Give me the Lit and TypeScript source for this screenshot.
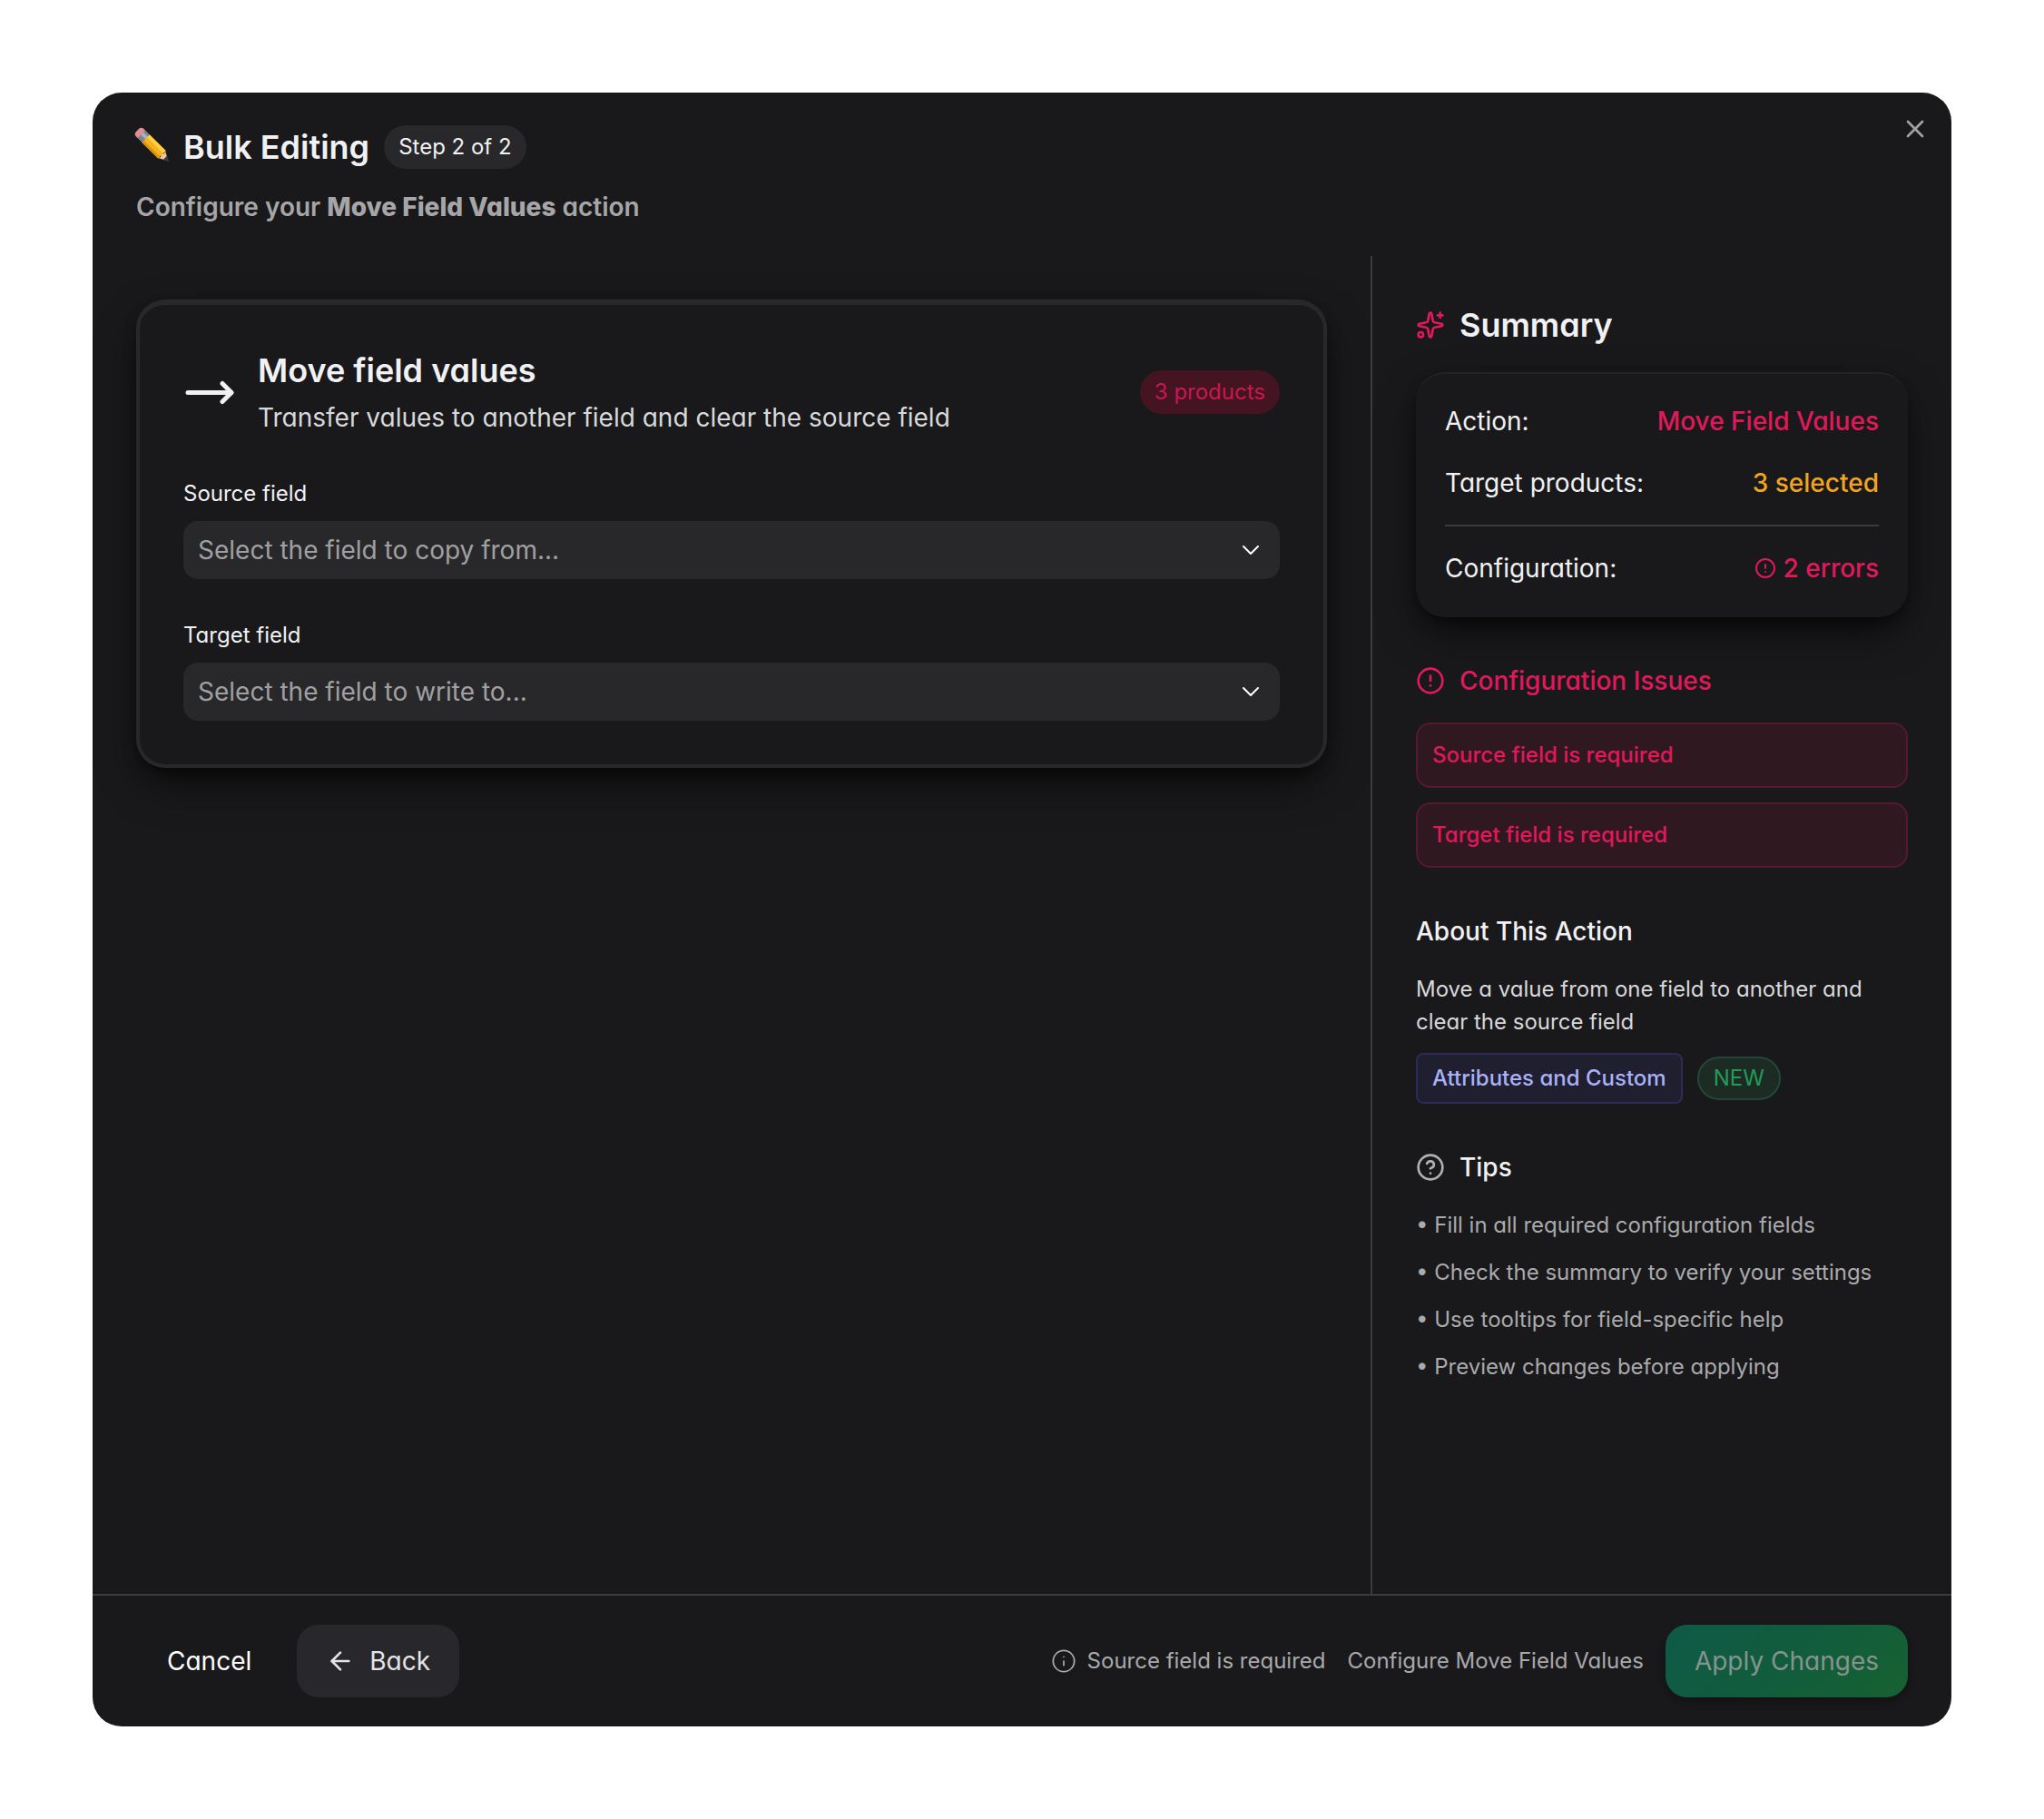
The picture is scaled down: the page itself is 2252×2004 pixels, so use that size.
import { LitElement, html, css, svg, nothing, type TemplateResult } from "lit";
import { customElement, property, state } from "lit/decorators.js";

const ICONS: Record<string, TemplateResult> = {
  sparkles: svg`
    <path d="M11.017 2.814a1 1 0 0 1 1.966 0l1.051 5.558a2 2 0 0 0 1.594 1.594l5.558 1.051a1 1 0 0 1 0 1.966l-5.558 1.051a2 2 0 0 0-1.594 1.594l-1.051 5.558a1 1 0 0 1-1.966 0l-1.051-5.558a2 2 0 0 0-1.594-1.594l-5.558-1.051a1 1 0 0 1 0-1.966l5.558-1.051a2 2 0 0 0 1.594-1.594z"/>
    <path d="M20 2v4"/><path d="M22 4h-4"/><circle cx="4" cy="20" r="2"/>`,
  alert: svg`<circle cx="12" cy="12" r="10"/><path d="M12 8v4"/><path d="M12 16h.01"/>`,
  help: svg`<circle cx="12" cy="12" r="10"/><path d="M9.09 9a3 3 0 0 1 5.83 1c0 2-3 3-3 3"/><path d="M12 17h.01"/>`,
  info: svg`<circle cx="12" cy="12" r="10"/><path d="M12 16v-4"/><path d="M12 8h.01"/>`,
  close: svg`<path d="M18 6 6 18"/><path d="m6 6 12 12"/>`,
  chevron: svg`<path d="m6 9 6 6 6-6"/>`,
  back: svg`<path d="m12 19-7-7 7-7"/><path d="M19 12H5"/>`,
};

@customElement("ui-icon")
export class UiIcon extends LitElement {
  static styles = css`
    :host { display: inline-flex; flex: none; width: 32px; height: 32px; }
    :host([size="sm"]) { width: 24px; height: 24px; }
    :host([size="md"]) { width: 28px; height: 28px; }
    .glyph {
      width: 100%;
      height: 100%;
      fill: none;
      stroke: currentColor;
      stroke-width: 2;
      stroke-linecap: round;
      stroke-linejoin: round;
    }
    .thin { stroke-width: 1.5; }
  `;

  @property() name = "";
  @property({ type: Boolean }) thin = false;

  render() {
    return html`<svg class="glyph ${this.thin ? "thin" : ""}" viewBox="0 0 24 24" aria-hidden="true">
      ${ICONS[this.name] ?? nothing}
    </svg>`;
  }
}

interface Field {
  id: string;
  label: string;
  placeholder: string;
}

@customElement("app-root")
export class AppRoot extends LitElement {
  static styles = css`
    :host {
      display: block;
      min-height: 100vh;
      box-sizing: border-box;
      padding: 102px;
      background: #ffffff;
      color: #f1f1f3;
      font-family: Inter, "Liberation Sans", sans-serif;
      font-feature-settings: "cv11";
      font-size: 28px;
      line-height: 44px;
    }
    * { box-sizing: border-box; }
    h1, h2, h3, p, ul { margin: 0; padding: 0; font-size: inherit; font-weight: inherit; }
    button, select { font: inherit; font-feature-settings: inherit; color: inherit; border: 0; margin: 0; }

    .dialog {
      position: relative;
      display: flex;
      flex-direction: column;
      min-height: calc(100vh - 204px);
      border-radius: 32px;
      background: #19191b;
      overflow: hidden;
    }

    .header { display: flex; flex-direction: column; gap: 22px; padding: 36px 48px 34px; }
    .title-row { display: flex; align-items: center; gap: 16px; }
    .pencil { width: 36px; height: 36px; flex: none; overflow: visible; }
    .title { font-size: 36px; line-height: 48px; font-weight: 600; }
    .subtitle { line-height: 40px; font-weight: 600; color: #a6a6a8; }
    .subtitle strong { font-weight: 800; }
    .close {
      position: absolute;
      top: 24px;
      right: 24px;
      display: flex;
      padding: 0;
      background: none;
      color: #a2a2a5;
    }

    .pill {
      display: inline-flex;
      align-items: center;
      height: 48px;
      padding: 0 16px;
      border-radius: 24px;
      font-size: 24px;
      line-height: 32px;
      white-space: nowrap;
    }
    .pill-step { background: #28282a; }
    .pill-count { background: #441423; color: #c9184f; }
    .pill-new { background: #1c2b23; color: #249a58; border: 2px solid #23483a; }

    .body { flex: 1; display: grid; grid-template-columns: minmax(0, 1fr) 640px; }
    .main { padding: 48px; }

    .card {
      padding: 48px;
      border: 4px solid #28282a;
      border-top-width: 6px;
      border-radius: 32px;
      box-shadow: 0 20px 50px -10px rgba(0, 0, 0, 0.7), 0 8px 16px -4px rgba(0, 0, 0, 0.5);
    }
    .card-head { display: flex; align-items: center; gap: 24px; margin-bottom: 48px; }
    .card-arrow { flex: none; width: 58px; height: 32px; }
    .card-text { flex: 1; display: flex; flex-direction: column; gap: 8px; }
    .card-sub { line-height: 40px; color: #d8d8da; }

    .fields { display: flex; flex-direction: column; gap: 46px; }
    .field { display: flex; flex-direction: column; gap: 14px; }
    .label { font-size: 24px; line-height: 32px; }
    .picker { display: grid; align-items: center; color: #ffffff; }
    .picker > * { grid-area: 1 / 1; }
    .picker ui-icon { justify-self: end; margin-right: 16px; pointer-events: none; }
    .select {
      appearance: none;
      width: 100%;
      height: 64px;
      padding: 0 64px 0 16px;
      border-radius: 16px;
      background: #28282a;
      color: #a0a0a3;
    }

    .aside {
      display: flex;
      flex-direction: column;
      gap: 48px;
      padding: 48px;
      border-left: 2px solid #3c3c3e;
    }
    .group { display: flex; flex-direction: column; gap: 24px; }
    .group-head { display: flex; align-items: center; gap: 16px; font-weight: 500; }
    .summary-title { font-size: 36px; line-height: 56px; font-weight: 600; }
    .accent { color: #e0195a; }
    .muted { color: #b0b0b3; }

    .summary {
      display: flex;
      flex-direction: column;
      gap: 24px;
      padding: 30px 32px 32px;
      border-radius: 32px;
      border-top: 2px solid #232325;
      box-shadow: 0 20px 50px -10px rgba(0, 0, 0, 0.7), 0 8px 16px -4px rgba(0, 0, 0, 0.5);
    }
    .row { display: flex; justify-content: space-between; align-items: center; }
    .row-value { display: flex; align-items: center; gap: 8px; font-weight: 500; }
    .warn { color: #f2a41f; }
    .rule { height: 2px; background: #3a3a3c; }

    .issues { display: flex; flex-direction: column; gap: 16px; list-style: none; }
    .issue {
      padding: 16px;
      border: 2px solid #581830;
      border-radius: 16px;
      background: #301821;
      font-size: 24px;
      line-height: 36px;
      font-weight: 500;
      color: #e0195a;
    }

    .about { display: flex; flex-direction: column; gap: 16px; }
    .copy { font-size: 24px; line-height: 36px; color: #d8d8da; }
    .tags { display: flex; align-items: center; gap: 16px; }
    .tag {
      padding: 8px 16px;
      border: 2px solid #2d2b56;
      border-radius: 8px;
      background: #1f1f30;
      color: #a9b1f7;
      font-size: 24px;
      line-height: 36px;
      font-weight: 500;
    }

    .tips { display: flex; flex-direction: column; gap: 16px; list-style: none; }
    .tip { font-size: 24px; line-height: 36px; color: #aaaaac; }
    .tip::before { content: "• "; }

    .footer {
      display: flex;
      align-items: center;
      justify-content: space-between;
      padding: 32px 48px;
      border-top: 2px solid #3c3c3e;
    }
    .actions { display: flex; align-items: center; gap: 16px; }
    .status { display: flex; align-items: center; gap: 24px; font-size: 24px; color: #a9a9ac; }
    .hint { display: flex; align-items: center; gap: 12px; }
    .button {
      display: flex;
      align-items: center;
      gap: 16px;
      height: 80px;
      padding: 0 32px;
      border-radius: 24px;
      background: none;
      font-size: 28px;
      color: #ffffff;
    }
    .button-cancel { border: 2px solid transparent; }
    .button-back { background: #28282c; color: #e4e4e7; }
    .button-apply {
      background: linear-gradient(135deg, #0f5a47, #115c3d 50%, #186132);
      color: #87938d;
      box-shadow: 0 4px 8px rgba(0, 0, 0, 0.3);
    }
  `;

  @state() private fields: Field[] = [
    { id: "source", label: "Source field", placeholder: "Select the field to copy from..." },
    { id: "target", label: "Target field", placeholder: "Select the field to write to..." },
  ];

  private issues = ["Source field is required", "Target field is required"];

  private tips = [
    "Fill in all required configuration fields",
    "Check the summary to verify your settings",
    "Use tooltips for field-specific help",
    "Preview changes before applying",
  ];

  private renderPencil() {
    return html`<svg class="pencil" viewBox="0 0 36 36" aria-hidden="true">
      <g transform="translate(5 3) rotate(45)">
        <rect x="-5" y="-6" width="9" height="12" rx="4" fill="#e58b93" />
        <rect x="1" y="-6" width="8" height="12" fill="#7d838e" />
        <rect x="1" y="-3" width="8" height="4" fill="#aab0ba" />
        <rect x="8" y="-6" width="25" height="12" fill="#f5b31c" />
        <rect x="8" y="-6" width="25" height="4" fill="#ffd044" />
        <rect x="8" y="3" width="25" height="3" fill="#d9930f" />
        <path d="M32-6 43 0 32 6 34 3 32 0 34-3z" fill="#ecc79a" />
        <path d="M38-3 44 0 38 3z" fill="#3b3b3b" />
      </g>
    </svg>`;
  }

  private renderField(f: Field) {
    return html`<div class="field">
      <label class="label" for=${f.id}>${f.label}</label>
      <div class="picker">
        <select class="select" id=${f.id}>
          <option>${f.placeholder}</option>
        </select>
        <ui-icon name="chevron" thin></ui-icon>
      </div>
    </div>`;
  }

  private renderMain() {
    return html`<main class="main">
      <section class="card">
        <div class="card-head">
          <svg class="card-arrow" viewBox="0 0 58 32" fill="none" stroke="#f1f1f3" stroke-width="5"
            stroke-linecap="round" stroke-linejoin="round" aria-hidden="true">
            <path d="M5 16.500H53M43 6.500 53 16.500 43 26.500" />
          </svg>
          <div class="card-text">
            <h2 class="title">Move field values</h2>
            <p class="card-sub">Transfer values to another field and clear the source field</p>
          </div>
          <span class="pill pill-count">3 products</span>
        </div>
        <div class="fields">${this.fields.map((f) => this.renderField(f))}</div>
      </section>
    </main>`;
  }

  private renderAside() {
    return html`<aside class="aside">
      <section class="group">
        <div class="group-head">
          <ui-icon class="accent" name="sparkles"></ui-icon>
          <h2 class="summary-title">Summary</h2>
        </div>
        <div class="summary">
          <div class="row"><span>Action:</span><span class="row-value accent">Move Field Values</span></div>
          <div class="row"><span>Target products:</span><span class="row-value warn">3 selected</span></div>
          <div class="rule"></div>
          <div class="row">
            <span>Configuration:</span>
            <span class="row-value accent"><ui-icon name="alert" size="sm"></ui-icon>2 errors</span>
          </div>
        </div>
      </section>
      <section class="group">
        <div class="group-head accent">
          <ui-icon name="alert"></ui-icon>
          <h3>Configuration Issues</h3>
        </div>
        <ul class="issues">
          ${this.issues.map((i) => html`<li class="issue">${i}</li>`)}
        </ul>
      </section>
      <section class="group">
        <h3 class="group-head">About This Action</h3>
        <div class="about">
          <p class="copy">Move a value from one field to another and clear the source field</p>
          <div class="tags">
            <span class="tag">Attributes and Custom</span>
            <span class="pill pill-new">NEW</span>
          </div>
        </div>
      </section>
      <section class="group">
        <div class="group-head">
          <ui-icon class="muted" name="help"></ui-icon>
          <h3>Tips</h3>
        </div>
        <ul class="tips">
          ${this.tips.map((t) => html`<li class="tip">${t}</li>`)}
        </ul>
      </section>
    </aside>`;
  }

  render() {
    return html`<div class="dialog" role="dialog" aria-labelledby="dialog-title">
      <header class="header">
        <div class="title-row">
          ${this.renderPencil()}
          <h1 class="title" id="dialog-title">Bulk Editing</h1>
          <span class="pill pill-step">Step 2 of 2</span>
        </div>
        <p class="subtitle">Configure your <strong>Move Field Values</strong> action</p>
      </header>
      <div class="body">${this.renderMain()} ${this.renderAside()}</div>
      <footer class="footer">
        <div class="actions">
          <button class="button button-cancel" type="button">Cancel</button>
          <button class="button button-back" type="button">
            <ui-icon name="back"></ui-icon>Back
          </button>
        </div>
        <div class="status">
          <span class="hint"><ui-icon name="info" size="md" thin></ui-icon>Source field is required</span>
          <span>Configure Move Field Values</span>
          <button class="button button-apply" type="button" disabled>Apply Changes</button>
        </div>
      </footer>
      <button class="close" type="button" aria-label="Close"><ui-icon name="close"></ui-icon></button>
    </div>`;
  }
}
